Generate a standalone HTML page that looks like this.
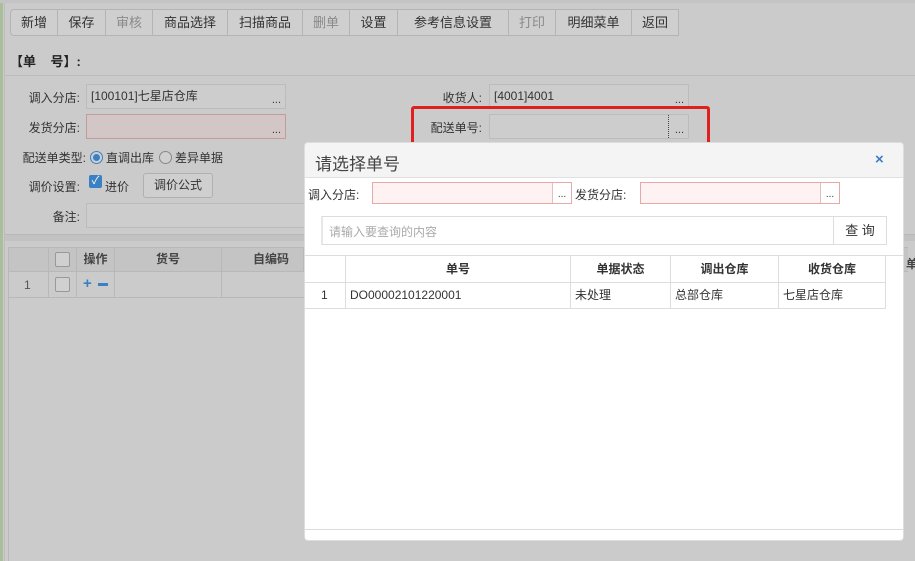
<!DOCTYPE html>
<html><head><meta charset="utf-8"><style>
*{box-sizing:border-box;margin:0;padding:0}
body{width:915px;height:561px;background:#cbcbcb;position:relative;overflow:hidden;font-family:"Liberation Sans","Noto Sans CJK SC",sans-serif;font-size:12px;color:#333}
.a{position:absolute}
.tb{position:absolute;top:9px;height:27px;border:1px solid #b4b4b4;border-right:none;background:#cfcfcf;font-size:13px;line-height:25px;text-align:center;color:#333}
.dis{color:#8a8a8a}
.lbl{position:absolute;font-size:12px;color:#333;text-align:right}
.inp{position:absolute;height:25px;border:1px solid #bcbcbc;background:#cdcdcd;font-size:12px;line-height:23px;padding-left:4px}
.dots{position:absolute;right:4px;bottom:2px;font-size:11px;line-height:11px}
.pk{background:#d2c6c6;border-color:#c49a9a}
.th{position:absolute;border-right:1px solid #b8b8b8;text-align:center;font-weight:bold;color:#444;line-height:24px}
.dth{position:absolute;top:113px;height:27px;border-right:1px solid #ddd;border-bottom:1px solid #ddd;text-align:center;font-weight:bold;line-height:26px;color:#333;font-size:12px}
.dtd{position:absolute;top:140px;height:26px;border-right:1px solid #ddd;border-bottom:1px solid #ddd;line-height:25px;padding-left:4px;color:#333;font-size:12px}
.cb{position:absolute;width:15px;height:15px;border:1px solid #999;border-radius:2px;background:#d0d0d0}
</style></head><body>
<div class="a" style="left:0;top:0;width:3px;height:561px;background:#a9bf9c"></div>
<div class="a" style="left:4px;top:0;width:1px;height:561px;background:#bdbdbd"></div>
<div class="a" style="left:0;top:0;width:915px;height:3px;background:#c4c4c4"></div>

<div class="tb" style="left:10px;width:47px;border-radius:4px 0 0 4px">新增</div>
<div class="tb" style="left:57px;width:48px">保存</div>
<div class="tb dis" style="left:105px;width:47px">审核</div>
<div class="tb" style="left:152px;width:75px">商品选择</div>
<div class="tb" style="left:227px;width:75px">扫描商品</div>
<div class="tb dis" style="left:302px;width:47px">删单</div>
<div class="tb" style="left:349px;width:48px">设置</div>
<div class="tb" style="left:397px;width:111px">参考信息设置</div>
<div class="tb dis" style="left:508px;width:47px">打印</div>
<div class="tb" style="left:555px;width:76px">明细菜单</div>
<div class="tb" style="left:631px;width:48px;border-right:1px solid #b4b4b4">返回</div>

<div class="a" style="left:10px;top:51px;font-size:13px;font-weight:bold;color:#222">【单&nbsp;&nbsp;&nbsp;&nbsp;号】:</div>
<div class="a" style="left:5px;top:75px;width:910px;height:1px;background:#bcbcbc"></div>

<div class="lbl" style="left:0;top:89px;width:80px">调入分店:</div>
<div class="inp" style="left:86px;top:84px;width:200px">[100101]七星店仓库<span class="dots">...</span></div>
<div class="lbl" style="left:0;top:119px;width:80px">发货分店:</div>
<div class="inp pk" style="left:86px;top:114px;width:200px"><span class="dots">...</span></div>
<div class="lbl" style="left:0;top:149px;width:86px">配送单类型:</div>
<div class="a" style="left:90px;top:151px;width:13px;height:13px;border-radius:50%;border:1px solid #3b7fc4;background:#d0d0d0"><div style="margin:2px;width:7px;height:7px;border-radius:50%;background:#3b7fc4"></div></div>
<div class="a" style="left:106px;top:149px">直调出库</div>
<div class="a" style="left:159px;top:151px;width:13px;height:13px;border-radius:50%;border:1px solid #888;background:#d0d0d0"></div>
<div class="a" style="left:175px;top:149px">差异单据</div>
<div class="lbl" style="left:0;top:178px;width:80px">调价设置:</div>
<div class="a" style="left:89px;top:175px;width:13px;height:13px;border-radius:2px;background:#3b7fc4;color:#fff;font-size:11px;line-height:13px;text-align:center">✓</div>
<div class="a" style="left:105px;top:178px">进价</div>
<div class="a" style="left:143px;top:173px;width:70px;height:25px;border:1px solid #b0b0b0;border-radius:3px;background:#cfcfcf;text-align:center;line-height:23px">调价公式</div>
<div class="lbl" style="left:0;top:208px;width:80px">备注:</div>
<div class="inp" style="left:86px;top:203px;width:230px"></div>

<div class="lbl" style="left:400px;top:89px;width:82px">收货人:</div>
<div class="inp" style="left:489px;top:84px;width:200px">[4001]4001<span class="dots">...</span></div>
<div class="lbl" style="left:400px;top:119px;width:82px">配送单号:</div>
<div class="inp" style="left:489px;top:114px;width:200px"><span class="a" style="left:178px;top:0;height:23px;border-left:1px dotted #445"></span><span class="dots">...</span></div>
<div class="a" style="left:411px;top:106px;width:299px;height:47px;border:3px solid #e0201e;border-radius:3px"></div>

<div class="a" style="left:5px;top:234px;width:910px;height:7px;background:#c2c2c2;border-top:1px solid #b8b8b8"></div>
<div class="a" style="left:8px;top:247px;width:900px;height:25px;background:#c4c4c4;border-top:1px solid #b8b8b8;border-bottom:1px solid #b8b8b8"></div>
<div class="th" style="left:8px;top:247px;width:41px;height:50px"></div>
<div class="th" style="left:49px;top:247px;width:28px;height:50px"></div>
<div class="th" style="left:77px;top:247px;width:38px;height:50px">操作</div>
<div class="th" style="left:115px;top:247px;width:107px;height:50px">货号</div>
<div class="th" style="left:222px;top:247px;width:82px;height:25px;text-align:right;padding-right:14px">自编码</div>
<div class="a" style="left:8px;top:297px;width:300px;height:1px;background:#b8b8b8"></div>
<div class="a" style="left:8px;top:247px;width:1px;height:314px;background:#b8b8b8"></div>
<div class="cb" style="left:55px;top:252px"></div>
<div class="cb" style="left:55px;top:277px"></div>
<div class="a" style="left:24px;top:278px;color:#555">1</div>
<div class="a" style="left:83px;top:275px;color:#3b7fc4;font-weight:bold;font-size:15px">+</div>
<div class="a" style="left:98px;top:283px;width:10px;height:3px;background:#3b7fc4"></div>
<div class="a" style="left:906px;top:255px;font-weight:bold;color:#444">单</div>

<div class="a" style="left:304px;top:142px;width:600px;height:399px;background:#fff;border:1px solid #ddd;border-radius:4px;overflow:hidden">
 <div class="a" style="left:0;top:0;width:600px;height:35px;background:#f4f4f4;border-bottom:1px solid #e0e0e0"></div>
 <div class="a" style="left:10px;top:7px;font-size:17px;color:#444">请选择单号</div>
 <div class="a" style="left:570px;top:8px;font-size:15px;color:#3b7fc4;font-weight:bold">×</div>
 <div class="a" style="left:3px;top:43px;color:#333">调入分店:</div>
 <div class="a" style="left:67px;top:39px;width:200px;height:22px;border:1px solid #e6a8a8;background:#fff2f2"><div style="position:absolute;right:0;top:0;width:19px;height:20px;border-left:1px solid #e0c0c0;background:#fff;font-size:10px;text-align:center;line-height:24px">...</div></div>
 <div class="a" style="left:270px;top:43px;color:#333">发货分店:</div>
 <div class="a" style="left:335px;top:39px;width:200px;height:22px;border:1px solid #e6a8a8;background:#fff2f2"><div style="position:absolute;right:0;top:0;width:19px;height:20px;border-left:1px solid #e0c0c0;background:#fff;font-size:10px;text-align:center;line-height:24px">...</div></div>
 <div class="a" style="left:16px;top:73px;width:566px;height:29px;border:1px solid #ddd;border-left:2px solid #e8e8e8"><span style="position:absolute;left:6px;top:6px;color:#aaa">请输入要查询的内容</span><div style="position:absolute;right:0;top:0;width:53px;height:27px;border-left:1px solid #ddd;text-align:center;line-height:27px;font-size:13px">查 询</div></div>
 <div class="a" style="left:0;top:112px;width:600px;height:1px;background:#ddd"></div>
 <div class="dth" style="left:0;width:41px"></div>
 <div class="dth" style="left:41px;width:225px">单号</div>
 <div class="dth" style="left:266px;width:100px">单据状态</div>
 <div class="dth" style="left:366px;width:108px">调出仓库</div>
 <div class="dth" style="left:474px;width:107px">收货仓库</div>
 <div class="dtd" style="left:0;width:41px;padding-left:16px">1</div>
 <div class="dtd" style="left:41px;width:225px">DO00002101220001</div>
 <div class="dtd" style="left:266px;width:100px">未处理</div>
 <div class="dtd" style="left:366px;width:108px">总部仓库</div>
 <div class="dtd" style="left:474px;width:107px">七星店仓库</div>
 <div class="a" style="left:0;top:386px;width:600px;height:1px;background:#ddd"></div>
</div>
</body></html>
